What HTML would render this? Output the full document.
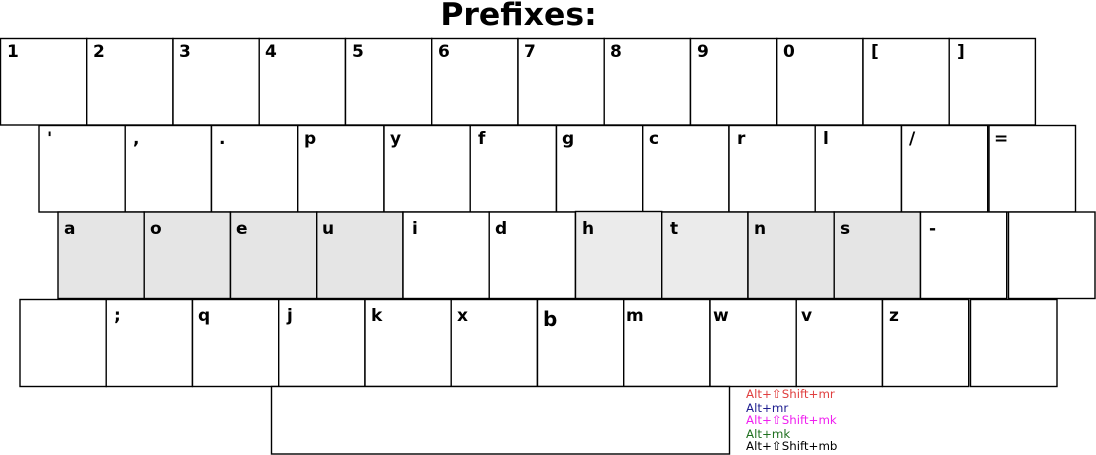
<!DOCTYPE html>
<html><head><style>
html,body{margin:0;padding:0;background:#fff;width:1096px;height:455px;overflow:hidden}
svg text{font-family:"DejaVu Sans","Liberation Sans",sans-serif}
.k{fill:#fff;stroke:#000;stroke-width:1.4}
.g{fill:#e5e5e5;stroke:#000;stroke-width:1.4}
.h{fill:#ebebeb;stroke:#000;stroke-width:1.4}
.l{font-weight:bold;font-size:17px;fill:#000}
.s{font-size:11.8px}
</style></head><body>
<svg width="1096" height="455" xmlns="http://www.w3.org/2000/svg">
<text x="518.5" y="25" text-anchor="middle" style="font-weight:bold;font-size:31.5px">Prefixes:</text>
<g>
<rect class="k" x="0.5" y="38.5" width="86.2" height="86.5"/><text class="l" x="7" y="57">1</text>
<rect class="k" x="86.7" y="38.5" width="86.2" height="86.5"/><text class="l" x="93" y="57">2</text>
<rect class="k" x="173" y="38.5" width="86.2" height="86.5"/><text class="l" x="179" y="57">3</text>
<rect class="k" x="259.2" y="38.5" width="86.2" height="86.5"/><text class="l" x="265" y="57">4</text>
<rect class="k" x="345.5" y="38.5" width="86.2" height="86.5"/><text class="l" x="352" y="57">5</text>
<rect class="k" x="431.7" y="38.5" width="86.2" height="86.5"/><text class="l" x="438" y="57">6</text>
<rect class="k" x="518" y="38.5" width="86.2" height="86.5"/><text class="l" x="524" y="57">7</text>
<rect class="k" x="604.2" y="38.5" width="86.2" height="86.5"/><text class="l" x="610" y="57">8</text>
<rect class="k" x="690.5" y="38.5" width="86.2" height="86.5"/><text class="l" x="697" y="57">9</text>
<rect class="k" x="776.7" y="38.5" width="86.2" height="86.5"/><text class="l" x="783" y="57">0</text>
<rect class="k" x="863" y="38.5" width="86.2" height="86.5"/><text class="l" x="871" y="57">[</text>
<rect class="k" x="949.2" y="38.5" width="86.2" height="86.5"/><text class="l" x="957" y="57">]</text>
</g>
<g>
<rect class="k" x="39" y="125.5" width="86.2" height="86.5"/><text class="l" x="47" y="144">'</text>
<rect class="k" x="125.2" y="125.5" width="86.2" height="86.5"/><text class="l" x="133" y="144">,</text>
<rect class="k" x="211.5" y="125.5" width="86.2" height="86.5"/><text class="l" x="219" y="144">.</text>
<rect class="k" x="297.7" y="125.5" width="86.2" height="86.5"/><text class="l" x="304" y="144">p</text>
<rect class="k" x="384" y="125.5" width="86.2" height="86.5"/><text class="l" x="390" y="144">y</text>
<rect class="k" x="470.2" y="125.5" width="86.2" height="86.5"/><text class="l" x="478" y="144">f</text>
<rect class="k" x="556.5" y="125.5" width="86.2" height="86.5"/><text class="l" x="562" y="144">g</text>
<rect class="k" x="642.7" y="125.5" width="86.2" height="86.5"/><text class="l" x="649" y="144">c</text>
<rect class="k" x="729" y="125.5" width="86.2" height="86.5"/><text class="l" x="737" y="144">r</text>
<rect class="k" x="815.2" y="125.5" width="86.2" height="86.5"/><text class="l" x="823" y="144">l</text>
<rect class="k" x="901.5" y="125.5" width="86.2" height="86.5"/><text class="l" x="909" y="144">/</text>
<rect class="k" x="989" y="125.5" width="86.5" height="86.5"/><text class="l" x="994" y="144">=</text>
</g>
<g>
<rect class="g" x="58" y="212" width="86.2" height="86.5"/><text class="l" x="64" y="234">a</text>
<rect class="g" x="144.2" y="212" width="86.2" height="86.5"/><text class="l" x="150" y="234">o</text>
<rect class="g" x="230.5" y="212" width="86.2" height="86.5"/><text class="l" x="236" y="234">e</text>
<rect class="g" x="316.7" y="212" width="86.2" height="86.5"/><text class="l" x="322" y="234">u</text>
<rect class="k" x="403" y="212" width="86.2" height="86.5"/><text class="l" x="412" y="234">i</text>
<rect class="k" x="489.2" y="212" width="86.2" height="86.5"/><text class="l" x="495" y="234">d</text>
<rect class="h" x="575.5" y="211.5" width="86.2" height="87"/><text class="l" x="582" y="234">h</text>
<rect class="h" x="661.7" y="212" width="86.2" height="86.5"/><text class="l" x="670" y="234">t</text>
<rect class="g" x="748" y="212" width="86.2" height="86.5"/><text class="l" x="754" y="234">n</text>
<rect class="g" x="834.2" y="212" width="86.2" height="86.5"/><text class="l" x="840" y="234">s</text>
<rect class="k" x="920.5" y="212" width="86.2" height="86.5"/><text class="l" x="929" y="234">-</text>
<rect class="k" x="1008.5" y="212" width="86.5" height="86.5"/>
</g>
<g>
<rect class="k" x="20" y="299.5" width="86.2" height="87"/>
<rect class="k" x="106.2" y="299.5" width="86.2" height="87"/><text class="l" x="114" y="321">;</text>
<rect class="k" x="192.5" y="299.5" width="86.2" height="87"/><text class="l" x="198" y="321">q</text>
<rect class="k" x="278.7" y="299.5" width="86.2" height="87"/><text class="l" x="287" y="321">j</text>
<rect class="k" x="365" y="299.5" width="86.2" height="87"/><text class="l" x="371" y="321">k</text>
<rect class="k" x="451.2" y="299.5" width="86.2" height="87"/><text class="l" x="457" y="321">x</text>
<rect class="k" x="537.5" y="299.5" width="86.2" height="87"/><text class="l" x="543" y="326" style="font-size:20px">b</text>
<rect class="k" x="623.7" y="299.5" width="86.2" height="87"/><text class="l" x="626" y="321">m</text>
<rect class="k" x="710" y="299.5" width="86.2" height="87"/><text class="l" x="713" y="321">w</text>
<rect class="k" x="796.2" y="299.5" width="86.2" height="87"/><text class="l" x="801" y="321">v</text>
<rect class="k" x="882.5" y="299.5" width="86.2" height="87"/><text class="l" x="889" y="321">z</text>
<rect class="k" x="970.5" y="299.5" width="86.5" height="87"/>
</g>
<rect class="k" x="271.5" y="386.5" width="458" height="67.5"/>
<text class="s" x="746" y="398" fill="#e04040">Alt+⇧Shift+mr</text>
<text class="s" x="746" y="412" fill="#202090">Alt+mr</text>
<text class="s" x="746" y="424" fill="#f020f0">Alt+⇧Shift+mk</text>
<text class="s" x="746" y="438" fill="#207020">Alt+mk</text>
<text class="s" x="746" y="450" fill="#000">Alt+⇧Shift+mb</text>
</svg>
</body></html>
